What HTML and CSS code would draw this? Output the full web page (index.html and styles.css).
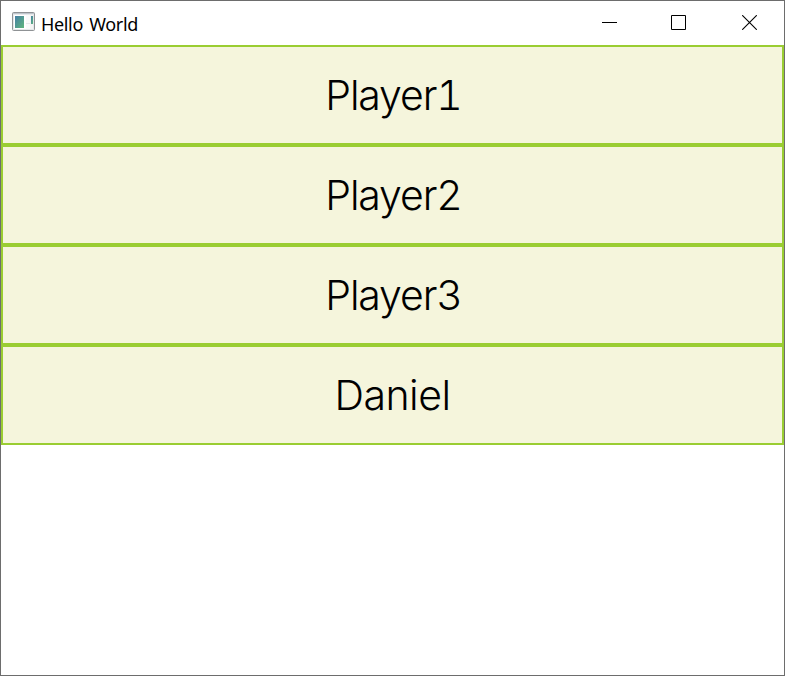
FILE: index.html
```
<!DOCTYPE html>
<html lang="en">
<head>
<meta charset="utf-8">
<title>Hello World</title>
<link rel="stylesheet" href="styles.css">
</head>
<body>
<div class="window">
  <header class="titlebar">
    <svg class="app-icon" width="23" height="19" viewBox="0 0 23 19">
      <defs>
        <linearGradient id="pane" x1="0" y1="0" x2="1" y2="1"><stop offset="0" stop-color="#457fa6"/><stop offset="1" stop-color="#60b67c"/></linearGradient>
      </defs>
      <rect x=".5" y=".5" width="22" height="18" rx="1" fill="#e6e8ea" stroke="#8f9295"/>
      <path d="M1 1.5H22" stroke="#bfc5cc"/>
      <rect x="2" y="3" width="12" height="14" fill="#fff"/>
      <rect x="3" y="4" width="9" height="12" fill="url(#pane)"/>
      <rect x="14" y="3" width="4" height="8" fill="#fafafa"/>
      <rect x="14" y="12" width="4" height="5" fill="#fafafa"/>
      <rect x="18" y="3" width="3" height="14" fill="#f4f4f4"/>
      <rect x="19" y="4" width="2" height="8" fill="url(#pane)"/>
    </svg>
    <span class="title">Hello World</span>
    <div class="controls">
      <svg width="15" height="15" viewBox="0 0 15 15"><path d="M0 7.5H15" stroke="#000"/></svg>
      <svg width="15" height="15" viewBox="0 0 15 15"><path d="M.5 .5H14.5V14.5H.5Z" fill="none" stroke="#000"/></svg>
      <svg width="15" height="15" viewBox="0 0 15 15"><path d="M.2 .2L14.8 14.8M14.8 .2L.2 14.8" stroke="#000" stroke-width="1.1"/></svg>
    </div>
  </header>
  <main class="players">
    <div class="player">Player1</div>
    <div class="player">Player2</div>
    <div class="player">Player3</div>
    <div class="player short">Daniel</div>
  </main>
</div>
</body>
</html>
```
FILE: styles.css
```
* { box-sizing: border-box; }
body { margin: 0; background: #fff; color: #000; }
.window {
  height: 676px;
  border: 1px solid #6d6d6d;
  background: #fff;
}
.titlebar {
  display: flex;
  height: 44px;
  padding: 0 27px 0 11px;
}
.app-icon { margin-top: 11px; }
.title {
  margin-left: 6px;
  padding-top: 1px;
  font: 18px/44px "Noto Sans", sans-serif;
  letter-spacing: -0.35px;
  word-spacing: 2px;
  white-space: nowrap;
}
.controls {
  display: flex;
  gap: 54px;
  margin: 14px 0 0 auto;
}
.controls svg:last-child { margin-left: 2px; }
.player {
  display: flex;
  align-items: center;
  justify-content: center;
  height: 100px;
  padding-left: 2px;
  border: 2px solid #9acd32;
  background: #f5f5dc;
  font: 300 41px/1 "Inter", sans-serif;
  font-variant-numeric: tabular-nums;
  letter-spacing: -1.1px;
}
.player.short {
  padding-left: 0;
  letter-spacing: -0.5px;
}
```
